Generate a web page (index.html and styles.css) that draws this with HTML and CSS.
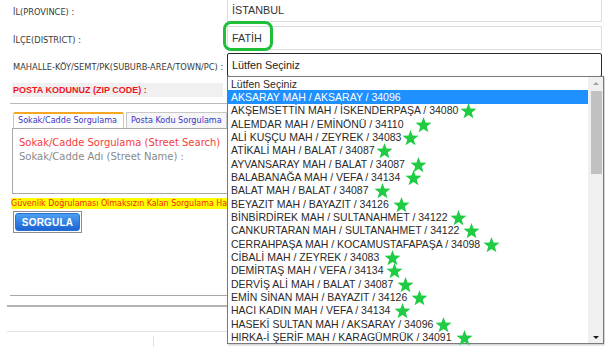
FILE: index.html
```
<!DOCTYPE html>
<html lang="tr">
<head>
<meta charset="utf-8">
<title>Posta Kodu</title>
<link rel="stylesheet" href="styles.css">
</head>
<body>
<div class="page">
  <div class="form">
    <div class="form-row">
      <label class="lbl">İL(PROVINCE) :</label>
      <div class="field">İSTANBUL</div>
    </div>
    <div class="form-row">
      <label class="lbl">İLÇE(DISTRICT) :</label>
      <div class="field">FATİH</div>
    </div>
    <div class="form-row">
      <label class="lbl">MAHALLE-KÖY/SEMT/PK(SUBURB-AREA/TOWN/PC) :</label>
      <div class="field select">Lütfen Seçiniz</div>
    </div>
  </div>

  <div class="zip">POSTA KODUNUZ (ZIP CODE) :</div>
  <div class="rule rule-top"></div>

  <div class="tabs">
    <div class="tab active">Sokak/Cadde Sorgulama</div>
    <div class="tab">Posta Kodu Sorgulama</div>
  </div>
  <div class="panel">
    <div class="panel-title">Sokak/Cadde Sorgulama (Street Search)</div>
    <div class="panel-label">Sokak/Cadde Adı (Street Name) :</div>
  </div>
  <div class="warning">Güvenlik Doğrulaması Olmaksızın Kalan Sorgulama Hakkınız</div>
  <div class="btn-wrap"><button class="btn">SORGULA</button></div>

  <div class="rule rule-a"></div>
  <div class="rule rule-b"></div>
  <div class="rule rule-c"></div>
  <div class="vline"></div>

  <div class="ring"></div>

  <div class="dropdown">
    <div class="options">
      <div class="opt">Lütfen Seçiniz</div>
      <div class="opt sel">AKSARAY MAH / AKSARAY / 34096</div>
      <div class="opt" style="--g:2px">AKŞEMSETTİN MAH / İSKENDERPAŞA / 34080<svg class="star" viewBox="0 0 24 23"><polygon points="12,0 14.9,8 23.5,8.4 16.7,13.6 19.1,22 12,17.1 4.9,22 7.3,13.6 0.5,8.4 9.1,8"/></svg></div>
      <div class="opt" style="--g:11px">ALEMDAR MAH / EMİNÖNÜ / 34110<svg class="star" viewBox="0 0 24 23"><polygon points="12,0 14.9,8 23.5,8.4 16.7,13.6 19.1,22 12,17.1 4.9,22 7.3,13.6 0.5,8.4 9.1,8"/></svg></div>
      <div class="opt" style="--g:1px">ALİ KUŞÇU MAH / ZEYREK / 34083<svg class="star" viewBox="0 0 24 23"><polygon points="12,0 14.9,8 23.5,8.4 16.7,13.6 19.1,22 12,17.1 4.9,22 7.3,13.6 0.5,8.4 9.1,8"/></svg></div>
      <div class="opt" style="--g:1px">ATİKALİ MAH / BALAT / 34087<svg class="star" viewBox="0 0 24 23"><polygon points="12,0 14.9,8 23.5,8.4 16.7,13.6 19.1,22 12,17.1 4.9,22 7.3,13.6 0.5,8.4 9.1,8"/></svg></div>
      <div class="opt" style="--g:5px">AYVANSARAY MAH / BALAT / 34087<svg class="star" viewBox="0 0 24 23"><polygon points="12,0 14.9,8 23.5,8.4 16.7,13.6 19.1,22 12,17.1 4.9,22 7.3,13.6 0.5,8.4 9.1,8"/></svg></div>
      <div class="opt" style="--g:5px">BALABANAĞA MAH / VEFA / 34134<svg class="star" viewBox="0 0 24 23"><polygon points="12,0 14.9,8 23.5,8.4 16.7,13.6 19.1,22 12,17.1 4.9,22 7.3,13.6 0.5,8.4 9.1,8"/></svg></div>
      <div class="opt" style="--g:5px">BALAT MAH / BALAT / 34087<svg class="star" viewBox="0 0 24 23"><polygon points="12,0 14.9,8 23.5,8.4 16.7,13.6 19.1,22 12,17.1 4.9,22 7.3,13.6 0.5,8.4 9.1,8"/></svg></div>
      <div class="opt" style="--g:4px">BEYAZIT MAH / BAYAZIT / 34126<svg class="star" viewBox="0 0 24 23"><polygon points="12,0 14.9,8 23.5,8.4 16.7,13.6 19.1,22 12,17.1 4.9,22 7.3,13.6 0.5,8.4 9.1,8"/></svg></div>
      <div class="opt" style="--g:3px">BİNBİRDİREK MAH / SULTANAHMET / 34122<svg class="star" viewBox="0 0 24 23"><polygon points="12,0 14.9,8 23.5,8.4 16.7,13.6 19.1,22 12,17.1 4.9,22 7.3,13.6 0.5,8.4 9.1,8"/></svg></div>
      <div class="opt" style="--g:4px">CANKURTARAN MAH / SULTANAHMET / 34122<svg class="star" viewBox="0 0 24 23"><polygon points="12,0 14.9,8 23.5,8.4 16.7,13.6 19.1,22 12,17.1 4.9,22 7.3,13.6 0.5,8.4 9.1,8"/></svg></div>
      <div class="opt" style="--g:3px">CERRAHPAŞA MAH / KOCAMUSTAFAPAŞA / 34098<svg class="star" viewBox="0 0 24 23"><polygon points="12,0 14.9,8 23.5,8.4 16.7,13.6 19.1,22 12,17.1 4.9,22 7.3,13.6 0.5,8.4 9.1,8"/></svg></div>
      <div class="opt" style="--g:5px">CİBALİ MAH / ZEYREK / 34083<svg class="star" viewBox="0 0 24 23"><polygon points="12,0 14.9,8 23.5,8.4 16.7,13.6 19.1,22 12,17.1 4.9,22 7.3,13.6 0.5,8.4 9.1,8"/></svg></div>
      <div class="opt" style="--g:2px">DEMİRTAŞ MAH / VEFA / 34134<svg class="star" viewBox="0 0 24 23"><polygon points="12,0 14.9,8 23.5,8.4 16.7,13.6 19.1,22 12,17.1 4.9,22 7.3,13.6 0.5,8.4 9.1,8"/></svg></div>
      <div class="opt" style="--g:4px">DERVİŞ ALİ MAH / BALAT / 34087<svg class="star" viewBox="0 0 24 23"><polygon points="12,0 14.9,8 23.5,8.4 16.7,13.6 19.1,22 12,17.1 4.9,22 7.3,13.6 0.5,8.4 9.1,8"/></svg></div>
      <div class="opt" style="--g:4px">EMİN SİNAN MAH / BAYAZIT / 34126<svg class="star" viewBox="0 0 24 23"><polygon points="12,0 14.9,8 23.5,8.4 16.7,13.6 19.1,22 12,17.1 4.9,22 7.3,13.6 0.5,8.4 9.1,8"/></svg></div>
      <div class="opt" style="--g:4px">HACI KADIN MAH / VEFA / 34134<svg class="star" viewBox="0 0 24 23"><polygon points="12,0 14.9,8 23.5,8.4 16.7,13.6 19.1,22 12,17.1 4.9,22 7.3,13.6 0.5,8.4 9.1,8"/></svg></div>
      <div class="opt" style="--g:2px">HASEKİ SULTAN MAH / AKSARAY / 34096<svg class="star" viewBox="0 0 24 23"><polygon points="12,0 14.9,8 23.5,8.4 16.7,13.6 19.1,22 12,17.1 4.9,22 7.3,13.6 0.5,8.4 9.1,8"/></svg></div>
      <div class="opt" style="--g:4px">HIRKA-İ ŞERİF MAH / KARAGÜMRÜK / 34091<svg class="star" viewBox="0 0 24 23"><polygon points="12,0 14.9,8 23.5,8.4 16.7,13.6 19.1,22 12,17.1 4.9,22 7.3,13.6 0.5,8.4 9.1,8"/></svg></div>
    </div>
    <div class="scrollbar">
      <div class="arrow up"></div>
      <div class="thumb"></div>
      <div class="arrow down"></div>
    </div>
  </div>
</div>
</body>
</html>
```

FILE: styles.css
```
* { box-sizing: border-box; }
html, body { margin: 0; padding: 0; }
body {
  width: 605px;
  height: 347px;
  overflow: hidden;
  background: #fff;
  font-family: "Liberation Sans", Arial, sans-serif;
  color: #333;
}
.page {
  position: relative;
  width: 605px;
  height: 347px;
}

/* form rows */
.form { margin-top: -2px; }
.form-row {
  display: grid;
  grid-template-columns: 227px 375px;
  align-items: center;
  height: 24px;
  margin-bottom: 4px;
}
.form-row:nth-child(2) { margin-bottom: 3px; }
.lbl {
  padding-left: 13px;
  padding-top: 2px;
  font-family: "DejaVu Sans", Tahoma, sans-serif;
  font-stretch: condensed;
  font-size: 9.2px;
  color: #3a3a3a;
  white-space: nowrap;
  overflow: hidden;
}
.field {
  height: 24px;
  border: 1px solid #dcdcdc;
  background: #fff;
  padding-left: 4px;
  font-size: 10.8px;
  line-height: 22px;
  color: #333;
}
.select {
  border: 1px solid #2a2a2a;
  border-radius: 2px;
  color: #222;
}

/* zip code */
.zip {
  margin: 6px 0 0 12px;
  width: 211px;
  height: 14px;
  background: #f0f0f0;
  padding-left: 1px;
  font-size: 9px;
  line-height: 14px;
  font-weight: bold;
  color: #f0141e;
  white-space: nowrap;
}

.rule { height: 1px; background: #bdbdbd; }
.rule-top { margin: 6px 0 0 10px; width: 217px; height: 1px; background: #b9b9b9; }

/* tabs */
.tabs {
  display: flex;
  gap: 2px;
  margin: 8px 0 0 13px;
  width: 214px;
  height: 16px;
  position: relative;
  z-index: 1;
  overflow: hidden;
}
.tab {
  flex: none;
  height: 16px;
  padding: 0 4px;
  border: 1px solid #c8c8c8;
  border-bottom: none;
  background: #f6f6f6;
  font-family: "DejaVu Sans", Verdana, sans-serif;
  font-stretch: condensed;
  font-size: 9px;
  line-height: 15px;
  color: #3636c8;
  white-space: nowrap;
}
.tab.active {
  background: #fff;
  border-top: 2px solid #f5a623;
  border-radius: 2px 2px 0 0;
  width: 111px;
  height: 17px;
  line-height: 13px;
}
.panel {
  margin-left: 12px;
  width: 215px;
  height: 66px;
  border: 1px solid #a9a9a9;
  border-right: none;
  padding: 7px 0 0 6px;
  font-family: "DejaVu Sans", Verdana, sans-serif;
  font-size: 10px;
  line-height: 14px;
  white-space: nowrap;
  overflow: hidden;
}
.panel-title { color: #f63c3c; }
.panel-label { color: #8a8a8a; }

.warning {
  margin: 4px 0 0 11px;
  width: 216px;
  height: 11px;
  background: #ffff00;
  font-family: "DejaVu Sans", Verdana, sans-serif;
  font-stretch: condensed;
  font-size: 8.8px;
  line-height: 11px;
  color: #f0280a;
  white-space: nowrap;
  overflow: hidden;
}
.btn-wrap {
  margin: 2px 0 0 13px;
  width: 69px;
  height: 22px;
  border: 1px solid #8d8d8d;
  padding: 1px;
  background: #fff;
}
.btn {
  display: block;
  width: 100%;
  height: 100%;
  border: 1px solid #2b6fd0;
  border-radius: 3px;
  background: linear-gradient(#4d9ff2, #1b64d3);
  color: #fff;
  font-family: "Liberation Sans", Arial, sans-serif;
  font-size: 10px;
  font-weight: bold;
  padding: 0;
  letter-spacing: 0.2px;
}

.rule-a { margin: 62px 0 0 10px; width: 217px; background: #a8a8a8; }
.rule-b { margin: 9px 0 0 7px; width: 220px; height: 2px; background: #b4b4b4; }
.rule-c { margin: 24px 0 0 7px; width: 220px; background: #e2e2e2; }
.vline { margin: 4px 0 0 153px; width: 1px; height: 12px; background: #e2e2e2; }

/* highlight ring around FATİH */
.ring {
  position: absolute;
  left: 223px;
  top: 23px;
  width: 50px;
  height: 30px;
  border: 3px solid #20bf3a;
  border-radius: 8px;
}

/* open dropdown list */
.dropdown {
  position: absolute;
  left: 227px;
  top: 78px;
  width: 377px;
  height: 268px;
  border: 1px solid #7a7a7a;
  background: #fff;
  display: flex;
  box-shadow: 1px 1px 2px rgba(0,0,0,0.25);
}
.options {
  flex: 1;
  font-family: "Liberation Sans", Arial, sans-serif;
  font-size: 10.5px;
  color: #2a2a2a;
}
.opt {
  display: flex;
  align-items: center;
  height: 13.33px;
  padding-left: 3px;
  white-space: nowrap;
}
.opt.sel { background: #1e90ff; color: #fff; }
.star {
  flex: none;
  width: 17px;
  height: 16px;
  margin-left: var(--g, 3px);
  fill: #1fcc44;
  position: relative;
  top: 1px;
}
.scrollbar {
  width: 15px;
  background: #f0f0f0;
  display: flex;
  flex-direction: column;
  align-items: center;
  border-left: 1px solid #f0f0f0;
}
.arrow { width: 0; height: 0; border-left: 3px solid transparent; border-right: 3px solid transparent; }
.arrow.up { margin-top: 5px; border-bottom: 3px solid #a3a3a3; }
.arrow.down { margin-top: auto; margin-bottom: 4px; border-top: 3px solid #1a1a1a; }
.thumb { margin-top: 6px; width: 11px; height: 83px; background: #c1c1c1; }
```
